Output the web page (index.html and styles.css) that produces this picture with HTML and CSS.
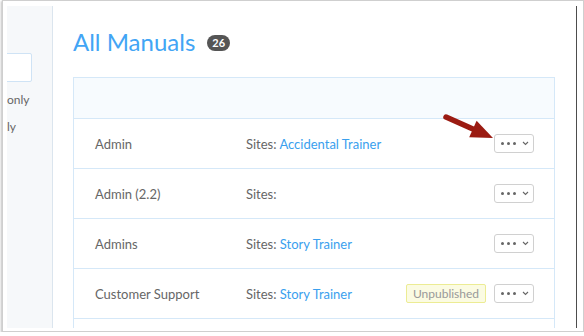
FILE: index.html
```html
<!DOCTYPE html>
<html lang="en">
<head>
  <meta charset="UTF-8">
  <title>All Manuals</title>
  <link rel="stylesheet" href="styles.css">
</head>
<body>
<div class="frame">
  <div class="app">
    <div class="sidebar">
      <div class="search"></div>
      <div class="filter first">only</div>
      <div class="filter second">ly</div>
    </div>
    <div class="main">
      <div class="title-row">
        <h1>All Manuals</h1>
        <span class="count">26</span>
      </div>
      <div class="card">
        <div class="card-head"></div>
        <div class="row">
          <div class="name">Admin</div>
          <div class="sites">Sites: <a href="#">Accidental Trainer</a></div>
          <div class="state"></div>
          <button class="more"><i></i><i></i><i></i><svg width="7" height="5" viewBox="0 0 7 5"><path d="M1 1l2.5 2.5L6 1" fill="none" stroke="#666" stroke-width="1.1"/></svg></button>
        </div>
        <div class="row">
          <div class="name">Admin (2.2)</div>
          <div class="sites">Sites:</div>
          <div class="state"></div>
          <button class="more"><i></i><i></i><i></i><svg width="7" height="5" viewBox="0 0 7 5"><path d="M1 1l2.5 2.5L6 1" fill="none" stroke="#666" stroke-width="1.1"/></svg></button>
        </div>
        <div class="row">
          <div class="name">Admins</div>
          <div class="sites">Sites: <a href="#">Story Trainer</a></div>
          <div class="state"></div>
          <button class="more"><i></i><i></i><i></i><svg width="7" height="5" viewBox="0 0 7 5"><path d="M1 1l2.5 2.5L6 1" fill="none" stroke="#666" stroke-width="1.1"/></svg></button>
        </div>
        <div class="row">
          <div class="name">Customer Support</div>
          <div class="sites">Sites: <a href="#">Story Trainer</a></div>
          <div class="state"><span class="unpublished">Unpublished</span></div>
          <button class="more"><i></i><i></i><i></i><svg width="7" height="5" viewBox="0 0 7 5"><path d="M1 1l2.5 2.5L6 1" fill="none" stroke="#666" stroke-width="1.1"/></svg></button>
        </div>
        <div class="row"></div>
      </div>
      <!-- annotation arrow pointing at the menu button -->
      <svg class="arrow" width="60" height="36" viewBox="0 0 60 36">
        <line x1="6" y1="7" x2="34" y2="19.5" stroke="#9b1b12" stroke-width="5.5" stroke-linecap="round"/>
        <polygon points="53,28 36.6,10.8 29.2,27.2" fill="#9b1b12"/>
      </svg>
    </div>
  </div>
</div>
</body>
</html>
```

FILE: styles.css
```css
body {
  margin: 0;
  background: #fff;
  font-family: 'Lato', 'Open Sans', sans-serif;
  color: #666;
}
.frame {
  margin-left: 2px;
  width: 582px;
  height: 332px;
  box-sizing: border-box;
  border: 1px solid #cfcfcf;
  padding: 5px 6px 3px 4px;
  box-shadow: -1px 1px 2px rgba(0, 0, 0, 0.25);
  overflow: hidden;
}
.app {
  display: flex;
  height: 322px;
  overflow: hidden;
}
.sidebar {
  width: 45px;
  flex: none;
  background: #f6f8fa;
  border-right: 1px solid #dbe5ee;
  overflow: hidden;
  padding-top: 47px;
}
.search {
  margin-left: -40px;
  width: 63px;
  height: 27px;
  background: #fff;
  border: 1px solid #cfe3f5;
  border-radius: 2px;
}
.filter {
  font-size: 12px;
  line-height: 15px;
  color: #666;
  white-space: nowrap;
}
.filter.first {
  margin-top: 10px;
}
.filter.second {
  margin-top: 12px;
}
.main {
  flex: 1;
  position: relative;
  border-right: 1px solid #4d4d4d;
  padding: 0 21px 0 20px;
  overflow: hidden;
}
.title-row {
  display: flex;
  align-items: center;
  height: 71px;
}
h1 {
  margin: 0;
  font-size: 24px;
  font-weight: 400;
  color: #42a5f5;
}
.count {
  margin-left: 12px;
  margin-top: 3px;
  background: #555;
  color: #fff;
  font-size: 11px;
  font-weight: 700;
  line-height: 16px;
  padding: 0 5px;
  border-radius: 8px;
}
.card {
  border: 1px solid #d5e8f8;
  border-bottom: none;
}
.card-head {
  height: 40px;
  background: #f7fbfe;
  border-bottom: 1px solid #d5e8f8;
}
.row {
  display: grid;
  grid-template-columns: 151px 1fr auto auto;
  align-items: center;
  height: 49px;
  padding: 0 20px 0 21px;
  border-bottom: 1px solid #d5e8f8;
  font-size: 13px;
}
.row a {
  color: #3aa0ee;
  text-decoration: none;
}
.state {
  margin-right: 8px;
}
.unpublished {
  display: inline-block;
  width: 78px;
  height: 17px;
  line-height: 17px;
  text-align: center;
  background: #fbfbe2;
  border: 1px solid #ecec94;
  border-radius: 2px;
  color: #999;
  font-size: 12px;
}
.more {
  width: 40px;
  height: 19px;
  padding: 0 0 0 1px;
  display: flex;
  align-items: center;
  justify-content: center;
  gap: 3px;
  background: #fff;
  border: 1px solid #d0d0d0;
  border-radius: 3px;
}
.more i {
  width: 3px;
  height: 3px;
  border-radius: 50%;
  background: #666;
}
.more svg {
  margin-left: 3px;
}
.arrow {
  position: absolute;
  left: 387px;
  top: 104px;
}
```
